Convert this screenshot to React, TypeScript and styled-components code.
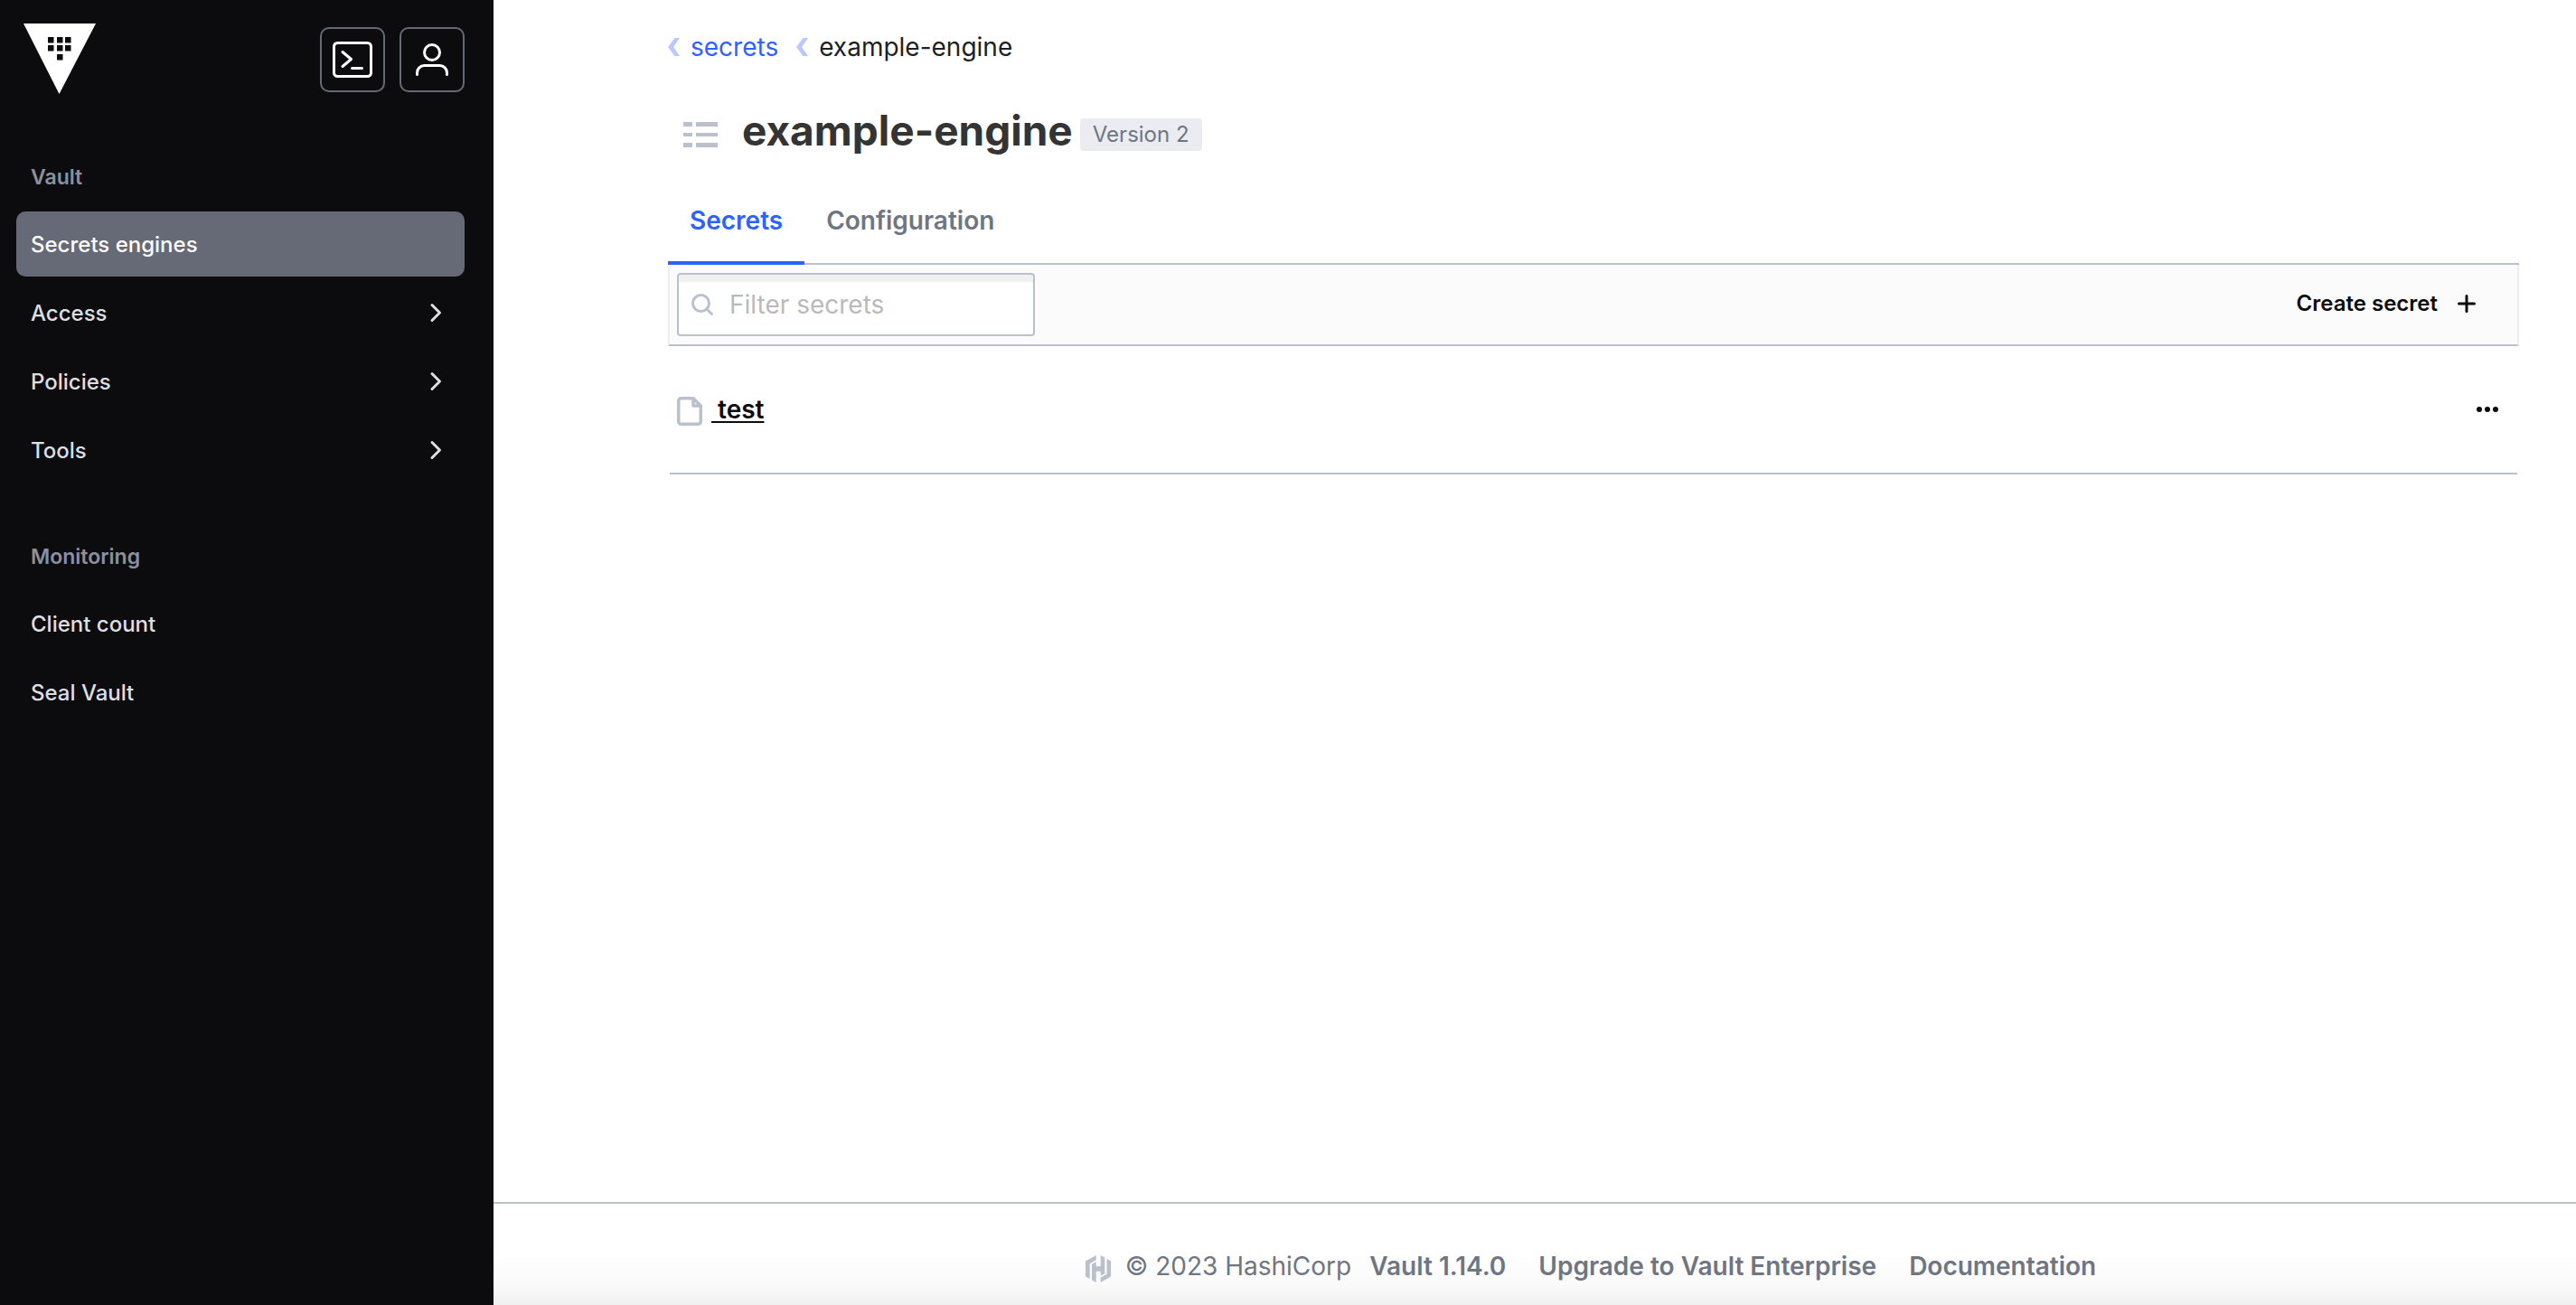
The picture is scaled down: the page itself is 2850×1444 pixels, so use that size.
import React from 'react';
import styled, { createGlobalStyle } from 'styled-components';

const Global = createGlobalStyle`
  *, *::before, *::after { box-sizing: border-box; }
  body {
    margin: 0;
    background: #fff;
    color: #1d1f23;
    font-family: Inter, "Liberation Sans", sans-serif;
    font-size: 28px;
    line-height: 40px;
  }
  a { color: inherit; text-decoration: none; }
  button { font: inherit; cursor: pointer; }
  svg { display: block; flex: none; }
  h1, ul, ol { margin: 0; padding: 0; list-style: none; }
`;

const Shell = styled.div`
  display: grid;
  grid-template-columns: 546px minmax(0, 1fr);
  min-height: 100vh;
`;

const Sidebar = styled.aside`
  background: #0c0c0e;
  padding: 26px 32px 32px 18px;
`;

const SideHeader = styled.header`
  display: flex;
  align-items: center;
  justify-content: space-between;
  height: 80px;
  padding-left: 8px;
`;

const HeaderActions = styled.div`
  display: flex;
  gap: 16px;
`;

const IconButton = styled.button`
  display: grid;
  place-items: center;
  width: 72px;
  height: 72px;
  padding: 0;
  color: #fff;
  background: transparent;
  border: 2px solid #656a76;
  border-radius: 10px;
`;

const Nav = styled.nav`
  display: flex;
  flex-direction: column;
  gap: 44px;
  padding-top: 52px;
`;

const NavTitle = styled.h2`
  margin: 0;
  padding: 20px 16px;
  color: #8c909c;
  font-size: 23px;
  font-weight: 600;
  line-height: 36px;
`;

const NavList = styled.ul`
  display: flex;
  flex-direction: column;
  gap: 4px;
`;

const NavLink = styled.a<{ $active?: boolean }>`
  display: flex;
  align-items: center;
  justify-content: space-between;
  height: 72px;
  padding: 2px 20px 0 16px;
  border-radius: 10px;
  font-size: 24px;
  font-weight: 500;
  color: ${(p) => (p.$active ? '#fff' : '#dedfe3')};
  background: ${(p) => (p.$active ? '#656a76' : 'transparent')};
`;

const Page = styled.div`
  display: flex;
  flex-direction: column;
`;

const Main = styled.main`
  flex: 1;
  padding: 32px 63px 32px 193px;
`;

const Crumbs = styled.ol`
  display: flex;
  gap: 20px;
`;

const Crumb = styled.li`
  display: flex;
  align-items: center;
  gap: 12px;
`;

const CrumbLink = styled.a`
  color: #2e62ff;
`;

const TitleRow = styled.div`
  display: flex;
  align-items: center;
  padding: 42px 0 0 16px;
  & > svg { margin-top: 10px; }
`;

const Title = styled.h1`
  margin: 0 8px 0 26px;
  color: #343434;
  font-size: 46px;
  font-weight: 700;
  line-height: 60px;
`;

const Badge = styled.span`
  margin-top: 10px;
  padding: 0 14px;
  border-radius: 4px;
  background: #ebecf1;
  color: #6f7682;
  font-size: 24px;
  line-height: 36px;
`;

const Tabs = styled.nav`
  display: flex;
  margin-top: 28px;
  box-shadow: inset 0 -2px 0 #bac1cc;
`;

const Tab = styled.a<{ $active?: boolean }>`
  padding: 22px 24px 25px;
  border-bottom: 4px solid ${(p) => (p.$active ? '#2e62ff' : 'transparent')};
  color: ${(p) => (p.$active ? '#2e62ff' : '#6f7682')};
  font-weight: 600;
`;

const Toolbar = styled.div`
  display: flex;
  align-items: center;
  justify-content: space-between;
  height: 90px;
  padding: 0 44px 0 8px;
  background: #fbfbfb;
  border: solid #ebedf2;
  border-width: 0 2px;
  border-bottom: 2px solid #bac1cc;
`;

const Filter = styled.label`
  display: flex;
  align-items: center;
  gap: 18px;
  width: 396px;
  height: 70px;
  padding: 0 14px;
  color: #bac1cc;
  background: #fff;
  border: 2px solid #bac1cc;
  border-radius: 4px;
  box-shadow: inset 0 8px 2px #f0f0f0;
`;

const FilterInput = styled.input`
  flex: 1;
  min-width: 0;
  padding: 0;
  border: 0;
  outline: 0;
  background: transparent;
  color: #1d1f23;
  font: inherit;
  &::placeholder { color: #bababa; opacity: 1; }
`;

const CreateLink = styled.a`
  display: flex;
  align-items: center;
  gap: 20px;
  padding-bottom: 2px;
  color: #0c0c0e;
  font-size: 24px;
  font-weight: 600;
`;

const SecretRow = styled.li`
  display: flex;
  align-items: center;
  justify-content: space-between;
  height: 142px;
  margin: 0 2px;
  padding: 0 16px 0 8px;
  border-bottom: 2px solid #bac1cc;
`;

const SecretLink = styled.a`
  display: flex;
  align-items: center;
  gap: 8px;
  color: #0c0c0e;
  font-weight: 600;
  & > svg { margin-top: 4px; }
`;

const SecretName = styled.span`
  white-space: pre;
  text-decoration: underline;
  text-decoration-thickness: 2px;
  text-underline-offset: 3px;
`;

const MoreButton = styled.button`
  display: grid;
  place-items: center;
  padding: 5px;
  color: #0c0c0e;
  background: transparent;
  border: 0;
`;

const Footer = styled.footer`
  display: flex;
  align-items: center;
  justify-content: center;
  height: 114px;
  padding: 42px 0 16px 124px;
  border-top: 2px solid #bac1cc;
  background: linear-gradient(#fff 50%, #fafafa 80%, #f0f0f0);
  color: #6f7682;
  & > svg { margin-top: 6px; }
`;

const Copyright = styled.span`
  margin: 0 20px 0 16px;
`;

const FooterLinks = styled.div`
  display: flex;
  gap: 36px;
  font-weight: 600;
`;

const VaultLogo = () => (
  <svg width="80" height="80" viewBox="0 0 80 80" aria-hidden="true">
    <path d="M0 0H80L39.500 78Z" fill="#fff" />
    <g fill="#0c0c0e">
      {[[27, 15], [37, 15], [46, 15], [27, 24], [37, 24], [46, 24], [37, 34]].map(([x, y]) => (
        <rect key={`${x}-${y}`} x={x} y={y} width="6.500" height="6.500" />
      ))}
    </g>
  </svg>
);

const TerminalIcon = () => (
  <svg width="44" height="40" viewBox="0 0 44 40" fill="none" stroke="currentColor" strokeWidth="3" strokeLinecap="round" strokeLinejoin="round" aria-hidden="true">
    <rect x="1.500" y="1.500" width="41" height="37" rx="4" />
    <path d="M11 11.500L20.500 19.500L11 27.500M21.500 29.500H32.500" />
  </svg>
);

const UserIcon = () => (
  <svg width="36" height="36" viewBox="0 0 36 36" fill="none" stroke="currentColor" strokeWidth="3" strokeLinecap="round" aria-hidden="true">
    <circle cx="18" cy="10" r="8.500" />
    <path d="M1.500 34.500V32.500a8 8 0 0 1 8-8H26.500a8 8 0 0 1 8 8v2" />
  </svg>
);

const ChevronRight = () => (
  <svg width="24" height="24" viewBox="0 0 24 24" fill="none" stroke="currentColor" strokeWidth="3" strokeLinecap="round" strokeLinejoin="round" aria-hidden="true">
    <path d="M8 2.500L16.500 11L8 19.500" />
  </svg>
);

const CrumbMark = () => (
  <svg width="13" height="20" viewBox="0 0 13 20" aria-hidden="true">
    <path d="M7.500 0H13L6 10L13 20H7.500L0 10Z" fill="#b9c9ff" />
  </svg>
);

const EngineIcon = () => (
  <svg width="40" height="28" viewBox="0 0 40 28" fill="#bac1cc" aria-hidden="true">
    <path d="M1 0h10v5H1zM15 0h24v5H15zM1 12h10v4H1zM15 12h24v4H15zM1 23h10v5H1zM15 23h24v5H15z" />
  </svg>
);

const SearchIcon = () => (
  <svg width="24" height="24" viewBox="0 0 24 24" fill="none" stroke="currentColor" strokeWidth="3" strokeLinecap="round" aria-hidden="true">
    <circle cx="10.500" cy="10.500" r="9" />
    <path d="M17 17L22.500 22.500" />
  </svg>
);

const PlusIcon = () => (
  <svg width="24" height="24" viewBox="0 0 24 24" fill="none" stroke="currentColor" strokeWidth="3" strokeLinecap="round" aria-hidden="true">
    <path d="M12 3.500V20.500M3.500 12H20.500" />
  </svg>
);

const FileIcon = () => (
  <svg width="30" height="32" viewBox="0 0 30 32" fill="none" stroke="#bac1cc" strokeWidth="3.500" strokeLinejoin="round" aria-hidden="true">
    <path d="M18 1.750H4.500A2.750 2.750 0 0 0 1.750 4.500V27.500A2.750 2.750 0 0 0 4.500 30.250H23.500A2.750 2.750 0 0 0 26.250 27.500V10ZM18 1.750V10H26.250" />
  </svg>
);

const DotsIcon = () => (
  <svg width="24" height="24" viewBox="0 0 24 24" fill="currentColor" aria-hidden="true">
    <circle cx="3" cy="12" r="3" />
    <circle cx="12" cy="12" r="3" />
    <circle cx="21" cy="12" r="3" />
  </svg>
);

const HashiCorpIcon = () => (
  <svg width="28" height="30" viewBox="0 0 28 30" fill="#bac1cc" aria-hidden="true">
    <path d="M11.700 0L0 6.500V23.500L4.700 26V9.200L11.700 5.200ZM16.700 0V12.300H11.700V7.200L7 9.800V27.400L11.700 30V17.700H16.700V22.800L21.300 20.200V2.600ZM23.500 4V20.800L16.700 24.800V30L28 23.500V6.500Z" />
  </svg>
);

type Item = { label: string; active?: boolean; nested?: boolean };

const sections: { title: string; items: Item[] }[] = [
  {
    title: 'Vault',
    items: [
      { label: 'Secrets engines', active: true },
      { label: 'Access', nested: true },
      { label: 'Policies', nested: true },
      { label: 'Tools', nested: true },
    ],
  },
  { title: 'Monitoring', items: [{ label: 'Client count' }, { label: 'Seal Vault' }] },
];

export default function App() {
  return (
    <>
      <Global />
      <Shell>
        <Sidebar>
          <SideHeader>
            <a href="#home" aria-label="Vault home"><VaultLogo /></a>
            <HeaderActions>
              <IconButton type="button" aria-label="Console"><TerminalIcon /></IconButton>
              <IconButton type="button" aria-label="User menu"><UserIcon /></IconButton>
            </HeaderActions>
          </SideHeader>
          <Nav>
            {sections.map((section) => (
              <div key={section.title}>
                <NavTitle>{section.title}</NavTitle>
                <NavList>
                  {section.items.map((item) => (
                    <li key={item.label}>
                      <NavLink href="#nav" $active={item.active}>
                        {item.label}
                        {item.nested && <ChevronRight />}
                      </NavLink>
                    </li>
                  ))}
                </NavList>
              </div>
            ))}
          </Nav>
        </Sidebar>
        <Page>
          <Main>
            <Crumbs>
              <Crumb><CrumbMark /><CrumbLink href="#secrets">secrets</CrumbLink></Crumb>
              <Crumb><CrumbMark />example-engine</Crumb>
            </Crumbs>
            <TitleRow>
              <EngineIcon />
              <Title>example-engine</Title>
              <Badge>Version 2</Badge>
            </TitleRow>
            <Tabs>
              <Tab href="#list" $active>Secrets</Tab>
              <Tab href="#configuration">Configuration</Tab>
            </Tabs>
            <Toolbar>
              <Filter>
                <SearchIcon />
                <FilterInput type="text" placeholder="Filter secrets" aria-label="Filter secrets" />
              </Filter>
              <CreateLink href="#create">Create secret<PlusIcon /></CreateLink>
            </Toolbar>
            <ul>
              <SecretRow>
                <SecretLink href="#test"><FileIcon /><SecretName> test</SecretName></SecretLink>
                <MoreButton type="button" aria-label="More options"><DotsIcon /></MoreButton>
              </SecretRow>
            </ul>
          </Main>
          <Footer>
            <HashiCorpIcon />
            <Copyright>© 2023 HashiCorp</Copyright>
            <FooterLinks>
              <a href="#version">Vault 1.14.0</a>
              <a href="#upgrade">Upgrade to Vault Enterprise</a>
              <a href="#docs">Documentation</a>
            </FooterLinks>
          </Footer>
        </Page>
      </Shell>
    </>
  );
}
